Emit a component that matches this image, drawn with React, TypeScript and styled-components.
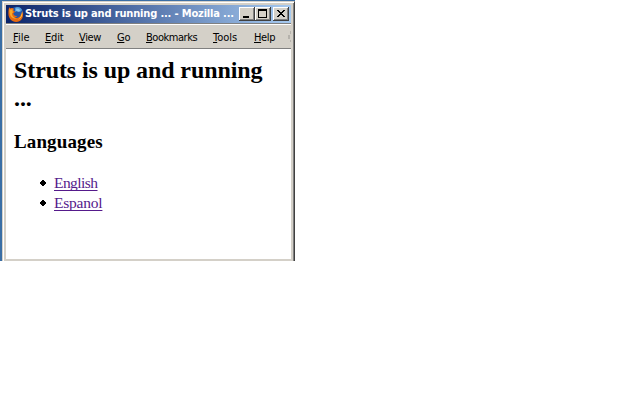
import React from 'react';
import styled, { createGlobalStyle } from 'styled-components';

const Global = createGlobalStyle`
  * { box-sizing: border-box; }
  body { margin: 0; background: #fff; overflow: hidden; }
`;

const Desktop = styled.div`
  width: 295px;
  height: 261px;
  padding: 1px 0 0 2px;
  background: #3a6ea5;
`;

const Window = styled.div`
  width: 293px;
  height: 260px;
  display: flex;
  flex-direction: column;
  background: #d4d0c8;
  border-left: 1px solid #d4d0c8;
  border-top: 1px solid #d4d0c8;
  border-right: 1px solid #404040;
  box-shadow: inset 1px 1px #fff, inset -1px 0 #808080;
  padding: 3px 3px 2px 3px;
`;

const TitleBar = styled.div`
  flex: none;
  height: 18px;
  display: flex;
  align-items: center;
  padding: 0 2px 0 2px;
  background: linear-gradient(to right, #0a246a, #a6caf0);
`;

const Title = styled.div`
  width: 214px;
  margin-left: 1px;
  font: bold 11px/16px "DejaVu Sans Condensed", "DejaVu Sans", sans-serif;
  letter-spacing: -0.16px;
  color: #fff;
  white-space: pre;
`;

const Caption = styled.button<{ $gap?: number }>`
  flex: none;
  width: 16px;
  height: 14px;
  margin: 0 0 0 ${(p) => p.$gap ?? 0}px;
  padding: 0;
  border: 0;
  display: block;
  background: #d4d0c8;
  box-shadow: inset -1px -1px #404040, inset 1px 1px #fff, inset -2px -2px #808080;
  svg { display: block; }
`;

const MenuBar = styled.div`
  flex: none;
  height: 26px;
  display: flex;
  align-items: flex-start;
  padding: 7px 0 0 7px;
  border-bottom: 1px solid #808080;
  box-shadow: inset 0 1px #808080, inset 0 2px #fff;
  font: 11px/16px "DejaVu Sans Condensed", "DejaVu Sans", sans-serif;
  color: #000;
`;

const MenuItem = styled.span<{ $w: number; $ls: number }>`
  flex: none;
  width: ${(p) => p.$w}px;
  letter-spacing: ${(p) => p.$ls}px;
  white-space: nowrap;
  u { text-underline-offset: 1px; text-decoration-thickness: 1px; }
`;

const Throbber = styled.svg`
  flex: none;
  display: block;
  margin-top: 1px;
`;

const Page = styled.main`
  flex: 1;
  background: #fff;
  padding: 7px 8px 0;
  font: 16px/20px "Liberation Serif", serif;
  color: #000;
`;

const Heading = styled.h1`
  margin: 0;
  font-size: 24px;
  line-height: 28px;
  letter-spacing: -0.1px;
`;

const SubHeading = styled.h2`
  margin: 19px 0 0;
  font-size: 19px;
  line-height: 22px;
  letter-spacing: 0.12px;
`;

const List = styled.ul`
  margin: 20px 0 0;
  padding: 0;
  list-style: none;
`;

const Item = styled.li`
  display: flex;
  align-items: center;
  height: 20px;
  padding-left: 26px;
  gap: 8px;
`;

const Link = styled.a<{ $ls: number }>`
  color: #551a8b;
  font-size: 15.5px;
  letter-spacing: ${(p) => p.$ls}px;
  text-decoration: underline;
  text-decoration-thickness: 1px;
  text-underline-offset: 2px;
  text-decoration-skip-ink: none;
`;

const Firefox = () => (
  <svg width="16" height="16" viewBox="0 0 16 16">
    <circle cx="8.6" cy="7.4" r="6.7" fill="#2456a8" />
    <path d="M7 2c2-2 6-.8 7 2l-2 2-3-1-2 1z" fill="#4f9bd8" />
    <path d="M8 2.5l3 .2 1.3 2.2-2 .8-2-.7z" fill="#8cc8ee" />
    <path d="M1.4 1.3l1 1.3c1.3-.7 2.5-.6 3.4.1L5.3 4.5l2 1.3-2 1.5c.3 2.2 2.2 3.1 4 2.4-.5 1.3-1.7 1.6-2.5 1.7 3 1.5 6.4-.4 6.3-4.2l.9.7.1-3c2.2 4 .8 10.8-5.8 11C3.6 16 .2 11.8.4 7.4.4 4.7.6 2.7 1.4 1.3z" fill="#e66a12" />
    <path d="M1.6 3l1.2.8c1-.4 1.7-.2 2.2.2L4 5.1l1.5 1L4 7.2c-.3 3 2.5 5.4 5.3 5.1-3 1.4-6.7-.6-7.3-3.7C1.6 6.6 1.2 4.5 1.6 3z" fill="#f8a92a" />
    <path d="M14 5.5c1 3.8-.7 7.4-4.7 8.2 3-1.4 4.5-4 4.7-8.2z" fill="#ffd34a" />
  </svg>
);

const Bullet = () => (
  <svg width="6" height="6" viewBox="0 0 6 6" shapeRendering="crispEdges">
    <path d="M2 0h2v1h1v1h1v2H5v1H4v1H2V5H1V4H0V2h1V1h1z" />
  </svg>
);

const menus: [string, number, number][] = [
  ['File', 32, 0],
  ['Edit', 34, -0.2],
  ['View', 38, -0.4],
  ['Go', 29, -0.3],
  ['Bookmarks', 67, -0.46],
  ['Tools', 41, 0],
  ['Help', 34, -0.35],
];

export default function App() {
  return (
    <>
      <Global />
      <Desktop>
        <Window>
          <TitleBar>
            <Firefox />
            <Title>Struts is up and running ... - Mozilla ...</Title>
            <Caption aria-label="Minimize">
              <svg width="16" height="14"><path d="M4 9h6v2H4z" /></svg>
            </Caption>
            <Caption aria-label="Maximize">
              <svg width="16" height="14"><path fillRule="evenodd" d="M3 2h9v9H3zM4 4v6h7V4z" /></svg>
            </Caption>
            <Caption $gap={2} aria-label="Close">
              <svg width="16" height="14" shapeRendering="crispEdges">
                <path d="M4 3h2v1h1v1h2V4h1V3h2v1h-1v1h-1v1H9v1h1v1h1v1h1v1h-2V9H9V8H7v1H6v1H4V9h1V8h1V7h1V6H6V5H5V4H4z" />
              </svg>
            </Caption>
          </TitleBar>
          <MenuBar>
            {menus.map(([label, w, ls]) => (
              <MenuItem key={label} $w={w} $ls={ls}>
                <u>{label[0]}</u>{label.slice(1)}
              </MenuItem>
            ))}
            <Throbber width="3" height="12" viewBox="0 0 3 12" shapeRendering="crispEdges">
              <path d="M2 0h1v3H2zM0 4h2v4H0zM2 9h1v2H2z" fill="#b5b2ac" />
            </Throbber>
          </MenuBar>
          <Page>
            <Heading>Struts is up and running ...</Heading>
            <SubHeading>Languages</SubHeading>
            <List>
              <Item><Bullet /><Link $ls={-0.55}>English</Link></Item>
              <Item><Bullet /><Link $ls={-0.22}>Espanol</Link></Item>
            </List>
          </Page>
        </Window>
      </Desktop>
    </>
  );
}
